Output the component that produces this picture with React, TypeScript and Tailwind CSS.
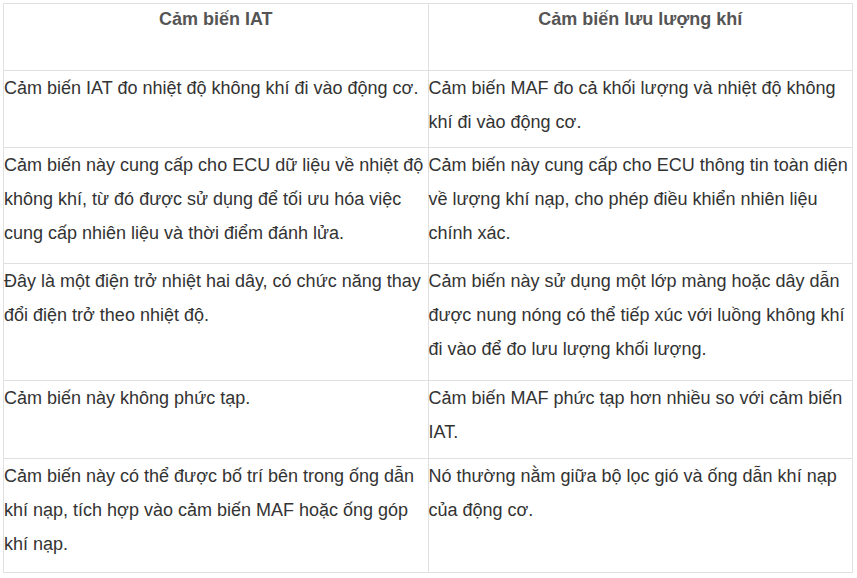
const rows: [string, string][] = [
  [
    "Cảm biến IAT đo nhiệt độ không khí đi vào động cơ.",
    "Cảm biến MAF đo cả khối lượng và nhiệt độ không khí đi vào động cơ.",
  ],
  [
    "Cảm biến này cung cấp cho ECU dữ liệu về nhiệt độ không khí, từ đó được sử dụng để tối ưu hóa việc cung cấp nhiên liệu và thời điểm đánh lửa.",
    "Cảm biến này cung cấp cho ECU thông tin toàn diện về lượng khí nạp, cho phép điều khiển nhiên liệu chính xác.",
  ],
  [
    "Đây là một điện trở nhiệt hai dây, có chức năng thay đổi điện trở theo nhiệt độ.",
    "Cảm biến này sử dụng một lớp màng hoặc dây dẫn được nung nóng có thể tiếp xúc với luồng không khí đi vào để đo lưu lượng khối lượng.",
  ],
  [
    "Cảm biến này không phức tạp.",
    "Cảm biến MAF phức tạp hơn nhiều so với cảm biến IAT.",
  ],
  [
    "Cảm biến này có thể được bố trí bên trong ống dẫn khí nạp, tích hợp vào cảm biến MAF hoặc ống góp khí nạp.",
    "Nó thường nằm giữa bộ lọc gió và ống dẫn khí nạp của động cơ.",
  ],
];

const heights = ["h-[77px]", "h-[116px]", "h-[117px]", "h-[78px]", "h-[114px]"];

export default function App() {
  return (
    <div className="min-h-screen bg-white pl-[3px] pt-[3px] font-['Liberation_Sans',Arial,sans-serif]">
      <table className="w-[850px] table-fixed border-collapse text-[18px] leading-[34px] text-[#333]">
        <thead>
          <tr className="h-[67px]">
            <th className="border border-[#e0e0e0] px-[2px] align-top font-bold leading-[30px] text-[#555]">
              Cảm biến IAT
            </th>
            <th className="border border-[#e0e0e0] px-[2px] align-top font-bold leading-[30px] text-[#555]">
              Cảm biến lưu lượng khí
            </th>
          </tr>
        </thead>
        <tbody>
          {rows.map((r, i) => (
            <tr key={i} className={heights[i]}>
              <td className="border border-[#e0e0e0] pl-0 pr-[2px] align-top">{r[0]}</td>
              <td className="border border-[#e0e0e0] pl-0 pr-[2px] align-top">{r[1]}</td>
            </tr>
          ))}
        </tbody>
      </table>
    </div>
  );
}
